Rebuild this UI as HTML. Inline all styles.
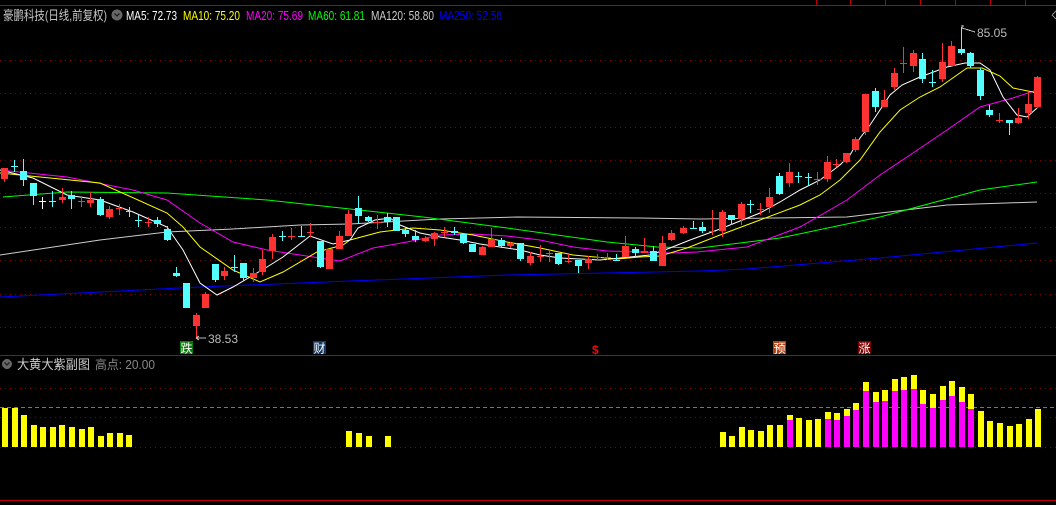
<!DOCTYPE html>
<html><head><meta charset="utf-8">
<style>
html,body{margin:0;padding:0;background:#000;width:1056px;height:505px;overflow:hidden}
svg{display:block}
text{font-family:"Liberation Sans","Noto Sans CJK SC",sans-serif}
</style></head><body>
<svg id="s" width="1056" height="505" xmlns="http://www.w3.org/2000/svg" shape-rendering="crispEdges">
<rect width="1056" height="505" fill="#000"/>
<line x1="0" y1="5.5" x2="1056" y2="5.5" stroke="#b00" />
<g stroke="#b00"><line x1="816.5" y1="0" x2="816.5" y2="5"/><line x1="850.5" y1="0" x2="850.5" y2="5"/><line x1="885.5" y1="0" x2="885.5" y2="5"/><line x1="920.5" y1="0" x2="920.5" y2="5"/><line x1="955.5" y1="0" x2="955.5" y2="5"/><line x1="990.5" y1="0" x2="990.5" y2="5"/><line x1="1025.5" y1="0" x2="1025.5" y2="5"/></g>
<g id="grid" stroke="#8a0000" stroke-dasharray="1,4"></g>
<line x1="0" y1="355.5" x2="1056" y2="355.5" stroke="#b00"/>
<line x1="0" y1="500.5" x2="1056" y2="500.5" stroke="#b00"/>
<line x1="0" y1="407.5" x2="1056" y2="407.5" stroke="#777" stroke-dasharray="4,3"/>
<g id="ma" fill="none" stroke-width="1" shape-rendering="auto"></g>
<g id="k"></g>
<g id="bars"></g>
<text x="3" y="20" font-size="13" fill="#c8c8c8" textLength="104" lengthAdjust="spacingAndGlyphs">豪鹏科技(日线,前复权)</text>
<circle cx="117" cy="15" r="5.5" fill="#666"/><path d="M114.5 13.5 L117 16 L119.5 13.5" stroke="#222" fill="none" stroke-width="1.3" shape-rendering="auto"/>
<text x="126" y="20" font-size="12.5" fill="#fff" textLength="51" lengthAdjust="spacingAndGlyphs">MA5: 72.73</text>
<text x="183" y="20" font-size="12.5" fill="#ff0" textLength="57" lengthAdjust="spacingAndGlyphs">MA10: 75.20</text>
<text x="246" y="20" font-size="12.5" fill="#f0f" textLength="57" lengthAdjust="spacingAndGlyphs">MA20: 75.69</text>
<text x="308" y="20" font-size="12.5" fill="#0f0" textLength="57" lengthAdjust="spacingAndGlyphs">MA60: 61.81</text>
<text x="371" y="20" font-size="12.5" fill="#ccc" textLength="63" lengthAdjust="spacingAndGlyphs">MA120: 58.80</text>
<text x="439" y="20" font-size="12.5" fill="#00f" textLength="63" lengthAdjust="spacingAndGlyphs">MA250: 52.56</text>
<circle cx="7" cy="364" r="5" fill="#666"/><path d="M4.5 362.5 L7 365 L9.5 362.5" stroke="#222" fill="none" stroke-width="1.3" shape-rendering="auto"/>
<text x="17" y="369" font-size="13" fill="#ccc" textLength="73" lengthAdjust="spacingAndGlyphs">大黄大紫副图</text>
<text x="95" y="369" font-size="12.5" fill="#888" textLength="60" lengthAdjust="spacingAndGlyphs">高点: 20.00</text>
<text x="208" y="343" font-size="12" fill="#bbb">38.53</text>
<path d="M196 338 H206 M196 338 l3 -2 M196 338 l3 2" stroke="#bbb" fill="none"/>
<text x="977" y="37" font-size="12" fill="#bbb">85.05</text>
<path d="M962 25 V28 M962 26 H964 M962 28 L975 32" stroke="#bbb" fill="none"/>
<rect x="180" y="341" width="13" height="13" fill="#0a7a0a"/><text x="180.5" y="352.5" font-size="12" fill="#fff">跌</text>
<rect x="313" y="341" width="13" height="13" fill="#123a66"/><text x="313.5" y="352.5" font-size="12" fill="#fff">财</text>
<text x="592" y="354" font-size="12" fill="#f00" font-weight="bold">$</text>
<rect x="773" y="341" width="13" height="13" fill="#b04010"/><text x="773.5" y="352.5" font-size="12" fill="#fff">预</text>
<rect x="858" y="341" width="13" height="13" fill="#7a0000"/><text x="858.5" y="352.5" font-size="12" fill="#fff">涨</text>
<path d="M1052 15 l4 -4 M1052 15 l4 4" stroke="#888" fill="none"/>
</svg>
<script>
var NS="http://www.w3.org/2000/svg";
function el(p,t,a){var e=document.createElementNS(NS,t);for(var k in a)e.setAttribute(k,a[k]);p.appendChild(e);return e;}
var g=document.getElementById('grid');
[60,93,127,160,193,227,260,294,327,388,417,447].forEach(function(y){el(g,'line',{x1:0,y1:y+.5,x2:1056,y2:y+.5});});
var ma=document.getElementById('ma');
function pl(c,pts){el(ma,'polyline',{points:pts,stroke:c});}
pl('#00f','0,297 100,292 200,287 350,281 507,275 700,271 747,269 880,258 1037,243');
pl('#ccc','0,255 100,240 167,232 233,229 300,225 350,224 440,219 517,217 640,218 700,219 847,217 947,205 1037,202');
pl('#0f0','3,197 67,192 167,193 267,200 350,209 423,217 507,228 607,242 657,247 700,248 780,238 880,217 980,190 1037,182');
pl('#f0f','0,170 67,177 133,190 167,200 200,223 233,242 267,250 333,260 340,261 373,248 407,242 440,235 473,234 507,236 540,240 573,247 607,251 640,252 673,253 697,252 747,247 800,227 847,200 880,175 913,153 947,130 980,107 1013,98 1037,90');
pl('#ff0','0,173 100,183 167,213 183,227 200,247 233,270 260,282 283,272 317,252 343,245 350,240 380,232 413,228 440,230 473,235 507,242 540,248 573,255 617,259 640,257 660,256 687,248 720,235 760,220 800,205 820,195 840,180 860,160 880,132 900,110 920,97 940,87 967,68 982,68 1000,76 1013,88 1033,92 1038,94');
pl('#fff','0,170 33,178 67,195 100,200 133,212 167,227 183,250 200,283 217,295 233,287 267,267 283,257 310,236 333,244 350,240 358,228 375,220 390,218 400,225 420,233 440,237 460,240 480,244 500,247 520,250 540,255 560,258 580,259 600,260 620,258 650,255 670,248 690,240 720,229 740,221 760,213 780,202 800,190 820,180 840,165 850,155 860,138 870,125 880,110 890,95 902,85 920,77 947,67 965,63 980,63 990,70 1003,97 1017,115 1027,117 1037,108');
var K=[
[4,168,179,168,182,'r'],[14,166,167,160,172,'c'],[23,171,180,159,186,'c'],[33,183,196,183,205,'c'],[42,201,202,197,209,'w'],[52,201,202,191,207,'c'],[62,197,200,188,203,'r'],[71,195,199,191,209,'c'],[81,201,202,196,207,'r'],[90,200,203,192,207,'r'],[100,199,215,197,216,'c'],[109,209,217,206,219,'r'],[119,208,209,204,215,'r'],[129,211,212,207,217,'c'],[138,220,221,215,227,'c'],[148,222,223,217,227,'r'],[157,220,224,217,227,'c'],[167,229,240,226,241,'c'],[176,273,276,267,277,'c'],[186,283,308,283,308,'c'],[196,315,326,313,337,'r'],[205,294,308,292,308,'r'],[215,264,280,264,282,'c'],[224,271,276,267,280,'r'],[234,267,268,255,272,'c'],[243,263,278,263,281,'c'],[253,273,278,268,282,'r'],[262,259,272,250,275,'r'],[272,237,251,234,259,'r'],[282,236,237,231,241,'c'],[291,236,237,228,240,'r'],[301,236,237,226,237,'c'],[310,232,233,223,237,'r'],[320,241,267,241,268,'c'],[329,249,269,249,269,'r'],[339,236,249,231,249,'r'],[348,214,236,210,236,'r'],[358,208,216,196,224,'c'],[368,217,221,216,222,'c'],[377,222,223,215,229,'r'],[387,217,222,213,227,'c'],[396,217,231,217,231,'c'],[405,230,234,228,237,'c'],[415,236,240,230,242,'c'],[425,238,241,236,242,'r'],[434,233,239,232,246,'r'],[444,232,233,227,237,'r'],[454,231,233,227,235,'c'],[463,234,243,234,244,'c'],[472,244,252,244,252,'c'],[482,247,255,246,255,'r'],[491,239,247,228,247,'r'],[501,240,246,238,248,'c'],[510,243,246,242,248,'r'],[520,243,259,243,261,'c'],[530,256,263,252,265,'r'],[540,256,257,245,262,'r'],[549,253,254,250,262,'r'],[558,253,264,253,265,'c'],[568,261,262,254,263,'r'],[578,260,266,260,273,'c'],[588,259,263,256,269,'r'],[597,257,258,254,261,'r'],[607,257,258,253,260,'r'],[616,260,261,254,261,'c'],[625,246,257,236,257,'r'],[635,249,253,247,257,'c'],[644,251,253,238,253,'r'],[653,251,261,246,261,'c'],[662,243,266,236,266,'r'],[671,233,240,230,241,'r'],[683,228,233,226,234,'r'],[693,228,229,221,229,'c'],[702,227,231,222,233,'c'],[712,231,232,210,235,'r'],[722,212,231,210,237,'r'],[731,215,220,215,225,'c'],[741,204,219,202,225,'r'],[750,204,205,200,213,'c'],[760,209,210,203,215,'r'],[769,197,207,188,213,'r'],[779,176,194,173,195,'c'],[789,172,183,163,187,'r'],[798,176,177,172,183,'c'],[808,177,178,173,185,'c'],[817,179,180,172,185,'r'],[827,162,179,156,182,'r'],[836,164,165,159,167,'r'],[846,153,162,153,163,'r'],[855,139,150,137,152,'r'],[865,94,132,94,135,'r'],[875,91,107,88,112,'c'],[884,100,107,90,107,'r'],[894,73,87,68,90,'r'],[903,63,64,47,73,'r'],[913,53,66,50,72,'r'],[922,59,79,53,83,'c'],[932,82,83,70,87,'c'],[942,62,79,43,82,'r'],[951,46,66,41,66,'r'],[961,49,53,27,55,'c'],[970,53,66,52,68,'c'],[980,70,96,68,100,'c'],[989,110,115,105,117,'c'],[999,120,121,113,123,'r'],[1009,120,123,120,135,'c'],[1018,118,123,108,124,'r'],[1028,104,113,92,119,'r'],[1037,77,107,76,108,'r']];
var kg=document.getElementById('k');
K.forEach(function(c){var col=c[5]=='r'?'#ff3232':(c[5]=='c'?'#54ffff':'#fff');var x=c[0];
el(kg,'rect',{x:x,y:c[3],width:1,height:c[4]-c[3],fill:col});
var h=c[2]-c[1];if(h<2){el(kg,'rect',{x:x-3,y:c[1],width:7,height:1,fill:col});}
else el(kg,'rect',{x:x-3,y:c[1],width:7,height:h,fill:col});});
var bg=document.getElementById('bars');
var B=[[2,408],[12,408],[21,415],[31,425],[40,427],[50,427],[59,425],[69,427],[79,429],[88,427],[98,436],[107,433],[117,433],[126,435],[346,431],[356,433],[366,436],[385,436],
[720,432],[729,436],[739,427],[748,430],[758,431],[767,425],[777,425],[787,420,415],[796,418],[806,420],[815,419],[825,419,412],[834,420,413],[844,416,409],[853,410,403],[863,391,382],[873,402,392],[882,401,390],[892,391,379],[901,390,377],[911,389,375],[920,404,390],[930,408,394],[940,400,386],[949,396,381],[959,402,387],[968,409,394],[978,411],[987,421],[997,423],[1007,426],[1016,424],[1026,419],[1035,409]];
B.forEach(function(b){var base=447;
if(b.length==2){el(bg,'rect',{x:b[0],y:b[1],width:6,height:base-b[1],fill:'#ff0'});}
else{el(bg,'rect',{x:b[0],y:b[2],width:6,height:b[1]-b[2],fill:'#ff0'});el(bg,'rect',{x:b[0],y:b[1],width:6,height:base-b[1],fill:'#f0f'});}});
</script>
</body></html>
